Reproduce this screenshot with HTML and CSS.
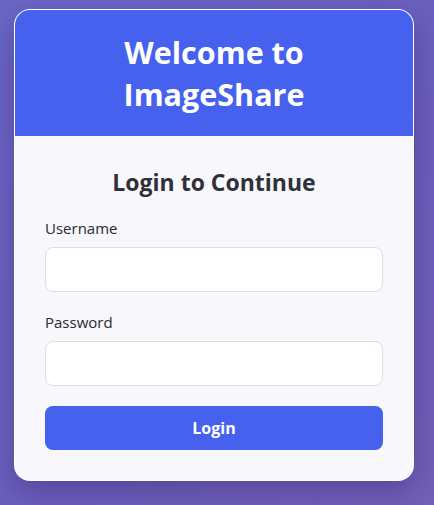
FILE: index.html
```html
<!DOCTYPE html>
<html lang="en">
<head>
<meta charset="utf-8">
<title>ImageShare Login</title>
<link rel="stylesheet" href="styles.css">
</head>
<body>
<div class="card">
  <header class="card-header">
    <h1>Welcome to ImageShare</h1>
  </header>
  <div class="card-body">
    <h2>Login to Continue</h2>
    <form class="form">
      <div class="field">
        <label for="username">Username</label>
        <input id="username" type="text">
      </div>
      <div class="field">
        <label for="password">Password</label>
        <input id="password" type="password">
      </div>
      <button type="button" class="btn">Login</button>
    </form>
  </div>
</div>
</body>
</html>
```
FILE: styles.css
```css
html, body {
  margin: 0;
  height: 100%;
}
body {
  background: linear-gradient(135deg, #6b67c6 0%, #6c5fbd 60%, #7360b8 100%);
  font-family: "Open Sans", "Noto Sans", sans-serif;
  box-sizing: border-box;
  padding: 9px 20px 0 14px;
}
.card {
  width: 400px;
  box-sizing: border-box;
  border: 1px solid rgba(255,255,255,0.85);
  border-radius: 16px;
  overflow: hidden;
  background: #f7f7fc;
  box-shadow: 0 10px 30px rgba(40, 20, 90, 0.35);
}
.card-header {
  background: #4561ee;
  padding: 21px 20px;
  text-align: center;
}
.card-header h1 {
  margin: 0;
  color: #fff;
  font-size: 30.5px;
  line-height: 42px;
  font-weight: 700;
}
.card-body {
  padding: 30px 30px 30px;
}
.card-body h2 {
  margin: 0 0 20px;
  text-align: center;
  color: #2f3038;
  font-size: 23px;
  line-height: 32px;
  font-weight: 700;
}
.field {
  display: flex;
  flex-direction: column;
  margin-bottom: 20px;
}
.field label {
  color: #2a2a2e;
  font-size: 15px;
  line-height: 20px;
  margin-bottom: 9px;
}
.field input {
  height: 45px;
  box-sizing: border-box;
  border: 1px solid #dcdce2;
  border-radius: 8px;
  background: #fff;
  font-size: 15px;
  padding: 0 12px;
}
.btn {
  display: block;
  width: 100%;
  height: 44px;
  border: none;
  border-radius: 8px;
  background: #4561ee;
  color: #fff;
  font-family: inherit;
  font-size: 16px;
  font-weight: 700;
}
```
